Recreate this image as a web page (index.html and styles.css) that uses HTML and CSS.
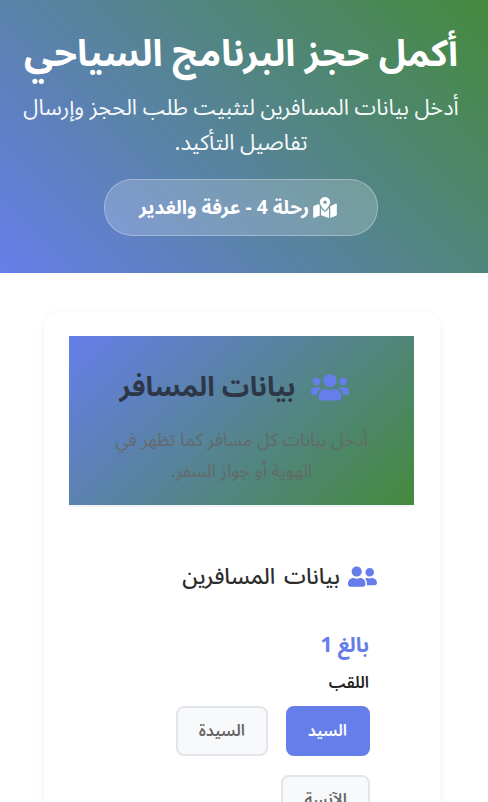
FILE: index.html
```html
<!DOCTYPE html>
<html lang="ar" dir="rtl">
<head>
<meta charset="utf-8">
<title>أكمل حجز البرنامج السياحي</title>
<link rel="stylesheet" href="styles.css">
</head>
<body>
<header class="hero">
  <h1>أكمل حجز البرنامج السياحي</h1>
  <p>أدخل بيانات المسافرين لتثبيت طلب الحجز وإرسال تفاصيل التأكيد.</p>
  <div class="pill">
    <svg class="pill-icon" viewBox="0 0 576 512"><path fill="currentColor" d="M288 0c-69.590 0-126 56.410-126 126 0 56.260 82.350 158.800 113.900 196.020 6.390 7.540 17.820 7.540 24.200 0C331.650 284.800 414 182.260 414 126 414 56.410 357.590 0 288 0zm0 168c-23.200 0-42-18.800-42-42s18.800-42 42-42 42 18.800 42 42-18.800 42-42 42zM20.120 215.950A32.006 32.006 0 0 0 0 245.660v250.320c0 11.320 11.430 19.060 21.940 14.860L160 448V214.920c-8.840-15.980-16.070-31.540-21.250-46.420L20.120 215.950zM288 359.670c-14.070 0-27.380-6.180-36.510-16.960-19.660-23.200-40.570-49.620-59.490-76.720v182l192 64V266c-18.920 27.090-39.820 53.520-59.490 76.720-9.130 10.770-22.440 16.950-36.510 16.950zm266.060-198.510L416 224v288l139.880-55.950A31.996 31.996 0 0 0 576 426.340V176.020c0-11.320-11.430-19.060-21.940-14.860z"/></svg>
    <span>رحلة 4 - عرفة والغدير</span>
  </div>
</header>
<main class="page">
  <section class="card">
    <div class="card-head">
      <h2>
        <svg class="head-icon" viewBox="0 0 640 512"><path fill="currentColor" d="M96 224c35.300 0 64-28.700 64-64s-28.700-64-64-64-64 28.700-64 64 28.700 64 64 64zm448 0c35.300 0 64-28.700 64-64s-28.700-64-64-64-64 28.700-64 64 28.700 64 64 64zm32 32h-64c-17.600 0-33.500 7.100-45.100 18.600 40.300 22.100 68.900 62 75.100 109.400h66c17.700 0 32-14.300 32-32v-32c0-35.300-28.700-64-64-64zm-256 0c61.900 0 112-50.100 112-112S381.900 32 320 32 208 82.100 208 144s50.100 112 112 112zm76.800 32h-8.300c-20.800 10-43.900 16-68.500 16s-47.600-6-68.500-16h-8.300C179.600 288 128 339.600 128 403.200V432c0 26.500 21.500 48 48 48h288c26.500 0 48-21.500 48-48v-28.800c0-63.600-51.600-115.200-115.200-115.200zm-223.700-13.400C161.500 263.100 145.600 256 128 256H64c-35.300 0-64 28.700-64 64v32c0 17.700 14.300 32 32 32h65.900c6.300-47.400 34.900-87.300 75.200-109.400z"/></svg>
        <span>بيانات المسافر</span>
      </h2>
      <p>أدخل بيانات كل مسافر كما تظهر في الهوية أو جواز السفر.</p>
    </div>
    <div class="travellers">
      <h3>
        <svg class="sub-icon" viewBox="0 0 640 512"><path fill="currentColor" d="M192 256c61.900 0 112-50.100 112-112S253.900 32 192 32 80 82.100 80 144s50.100 112 112 112zm76.800 32h-8.300c-20.800 10-43.900 16-68.500 16s-47.600-6-68.500-16h-8.300C51.600 288 0 339.600 0 403.200V432c0 26.500 21.500 48 48 48h288c26.500 0 48-21.500 48-48v-28.800c0-63.600-51.600-115.200-115.200-115.200zM480 256c53 0 96-43 96-96s-43-96-96-96-96 43-96 96 43 96 96 96zm48 32h-3.800c-13.900 4.800-28.600 8-44.200 8s-30.300-3.200-44.200-8H432c-20.400 0-39.200 5.900-55.700 15.400 24.400 26.300 39.700 61.200 39.700 99.800v38.400c0 2.200-.5 4.300-.6 6.400H592c26.500 0 48-21.500 48-48 0-61.900-50.100-112-112-112z"/></svg>
        <span>بيانات المسافرين</span>
      </h3>
      <h4>بالغ 1</h4>
      <label class="field-label">اللقب</label>
      <div class="choices">
        <button class="choice active" type="button">السيد</button>
        <button class="choice" type="button">السيدة</button>
        <button class="choice" type="button">الآنسة</button>
      </div>
    </div>
  </section>
</main>
</body>
</html>
```
FILE: styles.css
```css
* { box-sizing: border-box; }
html, body { margin: 0; padding: 0; }
body {
  background: #fff;
  color: #222;
  font-family: "Noto Sans Arabic", sans-serif;
  overflow: hidden;
  height: 802px;
}
.hero {
  height: 273px;
  padding: 28px 26px 0 20px;
  text-align: center;
  color: #fff;
  background: linear-gradient(45deg, #667eea, #448a3c);
}
.hero h1 {
  margin: 0 0 11px;
  font-size: 37px;
  line-height: 52px;
  font-weight: 700;
}
.hero p {
  margin: 0 -10px 18px;
  font-size: 21.800px;
  line-height: 35px;
  opacity: 0.95;
}
.pill {
  display: inline-flex;
  align-items: center;
  justify-content: center;
  gap: 4px;
  width: 274px;
  height: 57px;
  padding-inline-start: 6px;
  border: 1px solid rgba(255,255,255,.3);
  border-radius: 28px;
  background: rgba(255,255,255,.2);
  font-size: 19.200px;
  font-weight: 700;
}
.pill-icon { width: 24px; height: 21px; }
.page { padding: 39px 48px 0 44px; }
.card {
  width: 396px;
  padding: 24px 26px 24px 25px;
  border-radius: 15px;
  background: #fff;
  box-shadow: 0 2px 10px rgba(0,0,0,.06);
}
.card-head {
  height: 171px;
  padding: 28px 38px 0;
  text-align: center;
  background: linear-gradient(135deg, #667eea, #448a3c);
  border-bottom: 2px solid #f0f4f8;
}
.card-head h2 {
  margin: 0 0 15px;
  padding-inline-start: 15px;
  display: flex;
  align-items: center;
  justify-content: center;
  gap: 15px;
  font-size: 27.300px;
  line-height: 46px;
  font-weight: 700;
  color: #2d3748;
}
.head-icon { width: 38px; height: 30.400px; color: #667eea; }
.card-head p {
  margin: 0;
  font-size: 17.900px;
  line-height: 31px;
  color: #666;
  opacity: 0.85;
}
.travellers { padding: 54px 37px 0 38px; }
.travellers h3 {
  margin: 0 0 38px;
  display: flex;
  align-items: center;
  gap: 8px;
  font-size: 22px;
  line-height: 32px;
  font-weight: 500;
  word-spacing: 3px;
  color: #2d2d2d;
}
.sub-icon { width: 29px; height: 23.200px; color: #667eea; }
.travellers h4 {
  margin: 0 0 13px;
  padding-inline-start: 8px;
  font-size: 20.800px;
  line-height: 28px;
  font-weight: 700;
  color: #667eea;
}
.field-label {
  display: block;
  margin-bottom: 12px;
  padding-inline-start: 8px;
  font-size: 16px;
  line-height: 22px;
  font-weight: 600;
  color: #222;
}
.choices {
  display: flex;
  flex-wrap: wrap;
  gap: 19px 18px;
  padding-inline-start: 7px;
}
.choice {
  height: 50px;
  padding: 0 21px;
  border: 2px solid #e2e5e9;
  border-radius: 8px;
  background: #f8f9fa;
  color: #666;
  font-family: inherit;
  font-size: 16px;
  font-weight: 600;
}
.choice.active {
  width: 84px;
  border-color: #667eea;
  background: #667eea;
  color: #fff;
}
```
